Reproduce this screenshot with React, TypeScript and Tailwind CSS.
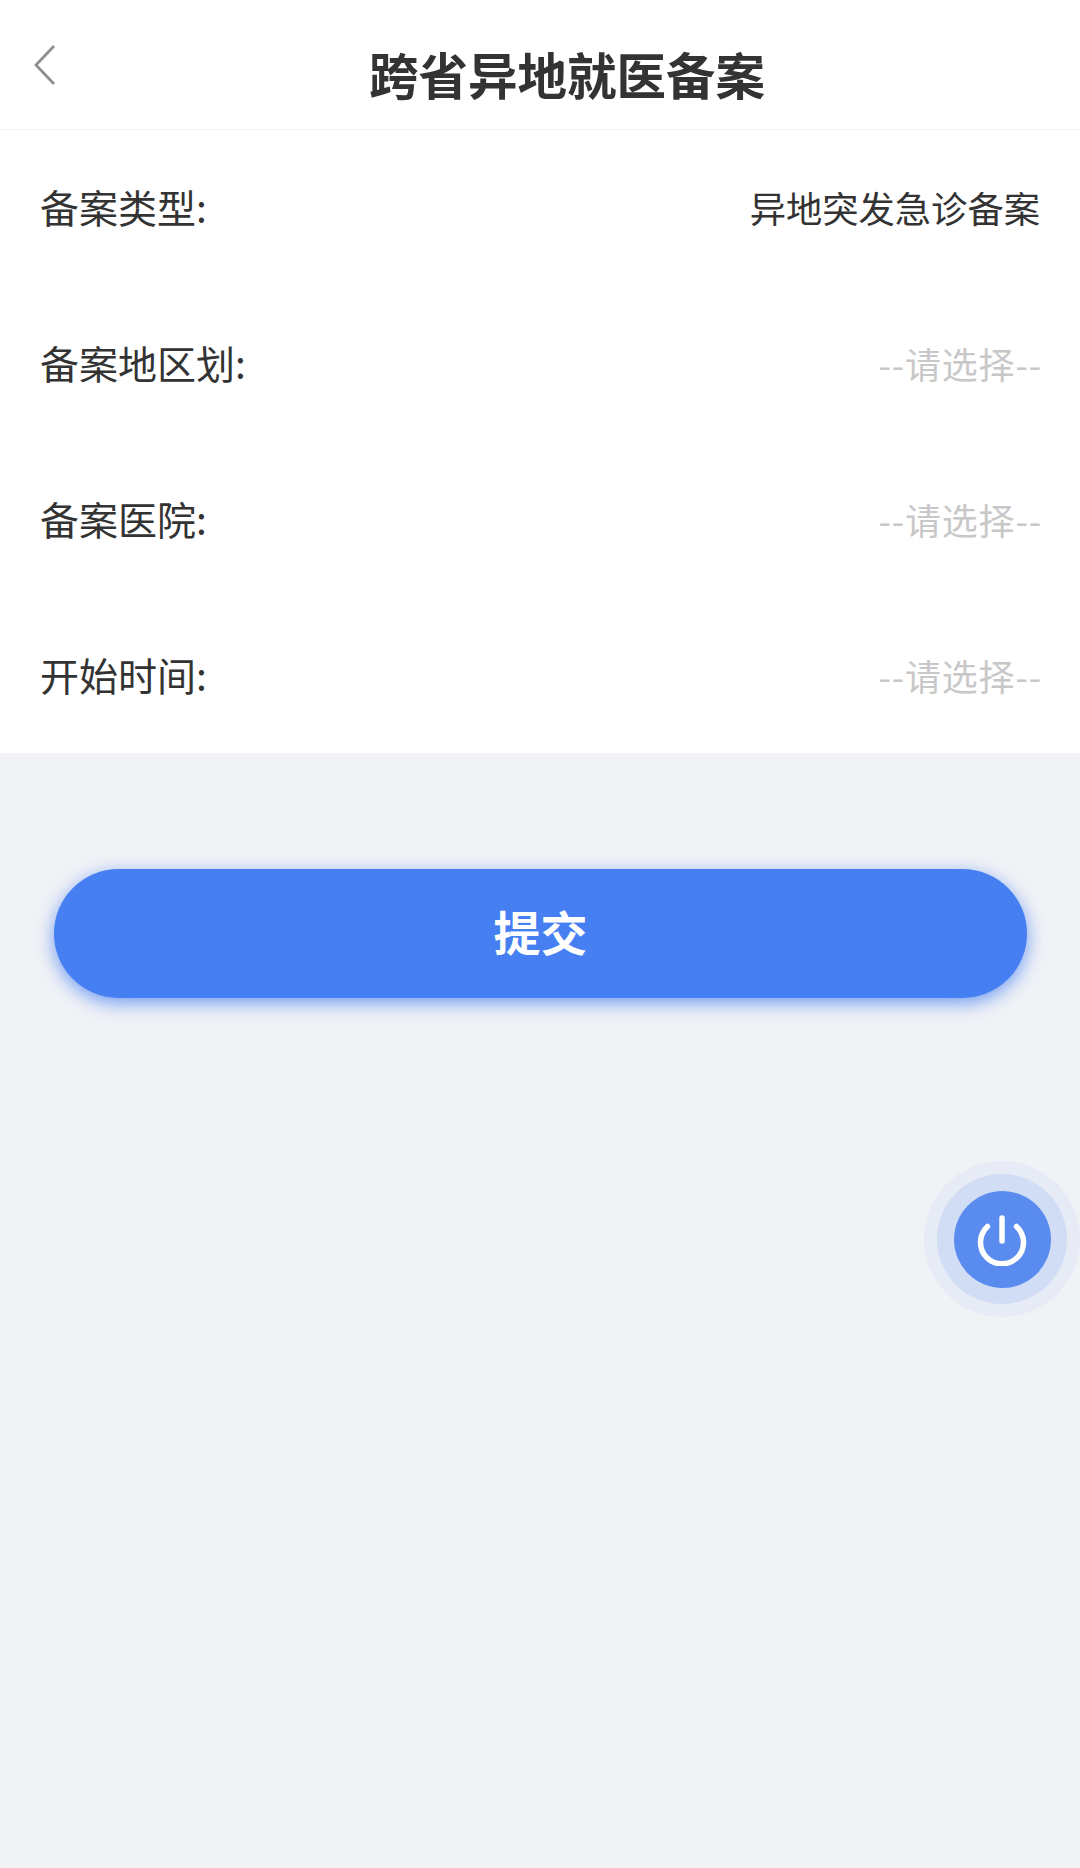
const font = { fontFamily: '"Noto Sans CJK SC", "Liberation Sans", sans-serif' };

const rows = [
  { label: "备案类型:", value: "异地突发急诊备案", filled: true, last: false },
  { label: "备案地区划:", value: "--请选择--", filled: false, last: false },
  { label: "备案医院:", value: "--请选择--", filled: false, last: false },
  { label: "开始时间:", value: "--请选择--", filled: false, last: true },
];

export default function App() {
  return (
    <div className="relative w-[1080px] h-[1868px] overflow-hidden bg-[#f0f2f6]" style={font}>
      <header className="relative flex h-[130px] items-center justify-center border-b border-[#f3f3f3] bg-white pt-[18px] pl-[54px]">
        <svg className="absolute left-[33px] top-[44px]" width="24" height="42" viewBox="0 0 24 42" fill="none">
          <path d="M21 2 L3 21 L21 40" stroke="#8f8f8f" strokeWidth="2.8" />
        </svg>
        <h1 className="text-[49.5px] font-bold leading-none text-[#333333]">跨省异地就医备案</h1>
      </header>
      <div className="bg-white">
        {rows.map((r) => (
          <div key={r.label} className={r.last ? "flex h-[155px] items-center justify-between px-[40px] pb-[3px]" : "flex h-[156px] items-center justify-between px-[40px] pb-[4px]"}>
            <span className="text-[39px] leading-none text-[#333333]">{r.label}</span>
            <span className={r.filled ? "mt-[2px] text-[36.3px] leading-none text-[#333333]" : "mr-[-2px] mt-[1px] text-[36px] leading-none tracking-[0.8px] text-[#c8c8c8]"}>{r.value}</span>
          </div>
        ))}
      </div>
      <div className="pl-[54px] pr-[53px] pt-[116px]">
        <button className="flex h-[129px] w-full items-center justify-center rounded-full bg-[#457ff2] pb-[6px] text-[47px] font-bold leading-none text-white shadow-[0_5px_18px_rgba(69,127,242,0.75)]">
          提交
        </button>
      </div>
      <div className="absolute left-[924px] top-[1161px] flex h-[156px] w-[156px] items-center justify-center rounded-full bg-[#e7ebf5]">
        <div className="flex h-[130px] w-[130px] items-center justify-center rounded-full bg-[#d0ddf5]">
          <div className="flex h-[97px] w-[97px] items-center justify-center rounded-full bg-[#5a8cef]">
            <svg className="mt-[2px]" width="52" height="52" viewBox="0 0 52 52" fill="none" stroke="white" strokeWidth="5.5" strokeLinecap="round">
              <path d="M26 4 V27" />
              <path d="M11.5 12.5 A21.5 21.5 0 1 0 40.5 12.5" />
            </svg>
          </div>
        </div>
      </div>
    </div>
  );
}
